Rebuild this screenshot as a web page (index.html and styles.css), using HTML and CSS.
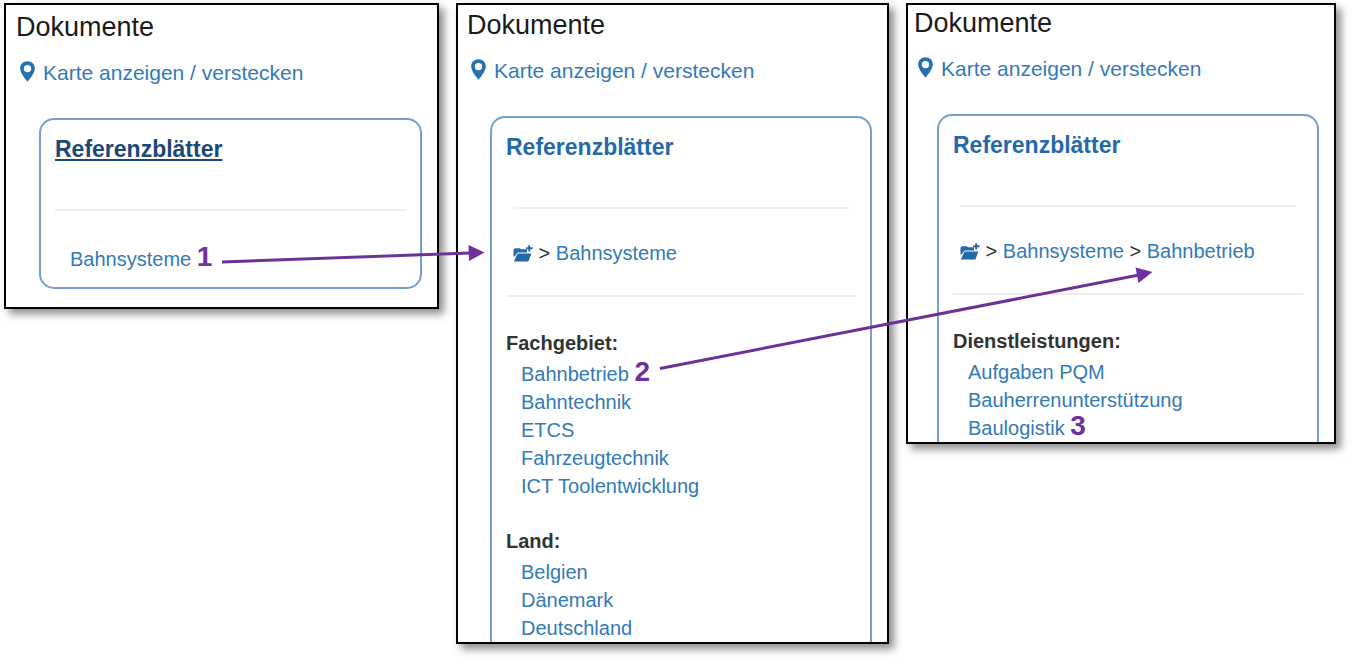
FILE: index.html
```html
<!DOCTYPE html>
<html lang="de">
<head>
<meta charset="utf-8">
<meta name="viewport" content="width=device-width, initial-scale=1">
<title>Dokumente</title>
<link rel="stylesheet" href="styles.css">
</head>
<body>
<svg class="sprite" aria-hidden="true">
  <symbol id="pin" viewBox="0 0 15 21">
    <path fill-rule="evenodd" d="M7.500 0.200C3.200 0.200 0.200 3.300 0.200 7.200C0.200 9.600 1.100 11.500 2.200 13.600C3.700 16.300 5.800 18.500 7.500 20.700C9.200 18.500 11.300 16.300 12.800 13.600C13.900 11.500 14.800 9.600 14.800 7.200C14.800 3.300 11.800 0.200 7.500 0.200ZM7.500 3.900A3.700 3.700 0 1 1 7.500 11.300A3.700 3.700 0 1 1 7.500 3.900Z"/>
  </symbol>
  <symbol id="folder" viewBox="0 0 20 17">
    <path d="M0.500 4.800L2 3.200H6.800L8 4.200H14V7.600H4.600L1.600 11.600L0.500 11.600Z"/>
    <path d="M4.600 8.400H18.400L15.400 16.500H0.800Z"/>
    <path d="M15.200 0.200H17.200V2.200H19.600V4.200H17.200V7L15.200 6V4.200H13.200V2.200H15.200Z"/>
  </symbol>
</svg>
<main class="board">
  <section class="panel panel-start">
    <h1 class="title">Dokumente</h1>
    <a class="map-link" href="#karte"><svg class="pin"><use href="#pin"/></svg>Karte anzeigen / verstecken</a>
    <div class="card">
      <h2 class="heading"><a class="active" href="#referenzen">Referenzblätter</a></h2>
      <hr class="rule">
      <ul class="links root-links">
        <li><a href="#bahnsysteme">Bahnsysteme</a> <b class="step">1</b></li>
      </ul>
    </div>
  </section>

  <section class="panel panel-system">
    <h1 class="title">Dokumente</h1>
    <a class="map-link" href="#karte"><svg class="pin"><use href="#pin"/></svg>Karte anzeigen / verstecken</a>
    <div class="card card-open">
      <h2 class="heading"><a href="#referenzen">Referenzblätter</a></h2>
      <hr class="rule rule-inset">
      <nav class="crumbs"><a href="#start" aria-label="Übergeordneter Ordner"><svg class="folder"><use href="#folder"/></svg></a> &gt; <a href="#bahnsysteme">Bahnsysteme</a></nav>
      <hr class="rule rule-crumbs">
      <h3 class="group">Fachgebiet:</h3>
      <ul class="links">
        <li><a href="#bahnbetrieb">Bahnbetrieb</a> <b class="step">2</b></li>
        <li><a href="#bahntechnik">Bahntechnik</a></li>
        <li><a href="#etcs">ETCS</a></li>
        <li><a href="#fahrzeugtechnik">Fahrzeugtechnik</a></li>
        <li><a href="#ict">ICT Toolentwicklung</a></li>
      </ul>
      <h3 class="group">Land:</h3>
      <ul class="links">
        <li><a href="#belgien">Belgien</a></li>
        <li><a href="#daenemark">Dänemark</a></li>
        <li><a href="#deutschland">Deutschland</a></li>
      </ul>
    </div>
  </section>

  <section class="panel panel-service">
    <h1 class="title">Dokumente</h1>
    <a class="map-link" href="#karte"><svg class="pin"><use href="#pin"/></svg>Karte anzeigen / verstecken</a>
    <div class="card card-open">
      <h2 class="heading"><a href="#referenzen">Referenzblätter</a></h2>
      <hr class="rule rule-inset">
      <nav class="crumbs"><a href="#start" aria-label="Übergeordneter Ordner"><svg class="folder"><use href="#folder"/></svg></a> &gt; <a href="#bahnsysteme">Bahnsysteme</a> &gt; <a href="#bahnbetrieb">Bahnbetrieb</a></nav>
      <hr class="rule rule-crumbs">
      <h3 class="group">Dienstleistungen:</h3>
      <ul class="links">
        <li><a href="#pqm">Aufgaben PQM</a></li>
        <li><a href="#bauherren">Bauherrenunterstützung</a></li>
        <li><a href="#baulogistik">Baulogistik</a> <b class="step">3</b></li>
      </ul>
    </div>
  </section>

  <svg class="arrows" viewBox="0 0 1354 660" preserveAspectRatio="none" aria-hidden="true">
    <path class="shaft" d="M222 262L470 253"/>
    <path class="head" d="M468.500 245L484.500 252.500L469 261Z"/>
    <path class="shaft" d="M660 368.500L1139 275"/>
    <path class="head" d="M1135.500 267.500L1152.500 272L1138.500 283Z"/>
  </svg>
</main>
</body>
</html>
```

FILE: styles.css
```css
* {
  box-sizing: border-box;
}

body {
  margin: 0;
  background: #fff;
  color: #333;
  font: 20px/28px "Liberation Sans", Arial, sans-serif;
}

a {
  color: #337ab7;
  text-decoration: none;
}

.sprite {
  position: absolute;
  width: 0;
  height: 0;
}

.board {
  position: relative;
  display: grid;
  grid-template-columns: 435fr 433fr 430fr;
  column-gap: 17px;
  align-items: start;
  padding: 3px 18px 16px 4px;
}

.panel {
  min-width: 0;
  overflow: hidden;
  border: 2px solid #000;
  background: #fff;
  box-shadow: 5px 5px 8px rgba(0, 0, 0, 0.45);
}

.panel-start {
  padding: 7px 15px 18px 10px;
}

.panel-system {
  padding: 5px 15px 0 9px;
}

.panel-service {
  padding: 3px 15px 0 6px;
}

.title {
  margin: 0 0 17px;
  color: #1a1a1a;
  font-size: 27px;
  font-weight: 400;
  line-height: 30px;
}

.map-link {
  display: flex;
  align-items: center;
  gap: 8px;
  padding-left: 4px;
  font-size: 21px;
}

.pin {
  width: 15px;
  height: 21px;
  margin-bottom: 3px;
  fill: #2672b0;
}

.card {
  margin: 31px 0 0 23px;
  padding: 15px 14px 14px;
  border: 2px solid #76a0ca;
  border-radius: 15px;
}

.card-open {
  padding-bottom: 0;
  border-bottom: 0;
  border-radius: 15px 15px 0 0;
}

.heading {
  margin: 0;
  font-size: 23px;
}

.heading a {
  color: #2569a8;
}

.heading .active {
  color: #1b4976;
  text-decoration: underline;
  text-decoration-thickness: 2px;
  text-underline-offset: 2px;
}

.rule {
  height: 2px;
  margin: 46px 0 0;
  border: 0;
  background: #eee;
}

.rule-inset {
  margin-right: 7px;
  margin-left: 7px;
}

.rule-crumbs {
  margin: 28px 0 32px;
}

.crumbs {
  margin: 30px 0 0 7px;
  white-space: nowrap;
}

.folder {
  width: 20px;
  height: 17px;
  fill: #2569a8;
  vertical-align: -2px;
}

.group {
  margin: 0 0 3px;
  font-size: 20px;
}

.links {
  margin: 0;
  padding: 0 0 0 15px;
  list-style: none;
}

.links + .group {
  margin-top: 27px;
}

.root-links {
  margin-top: 34px;
}

.step {
  color: #7030a0;
  font-size: 28px;
  line-height: 0;
}

.arrows {
  position: absolute;
  top: 0;
  left: 0;
  width: 100%;
  height: 660px;
  pointer-events: none;
}

.shaft {
  fill: none;
  stroke: #6b3398;
  stroke-width: 3;
}

.head {
  fill: #7030a0;
}
```
